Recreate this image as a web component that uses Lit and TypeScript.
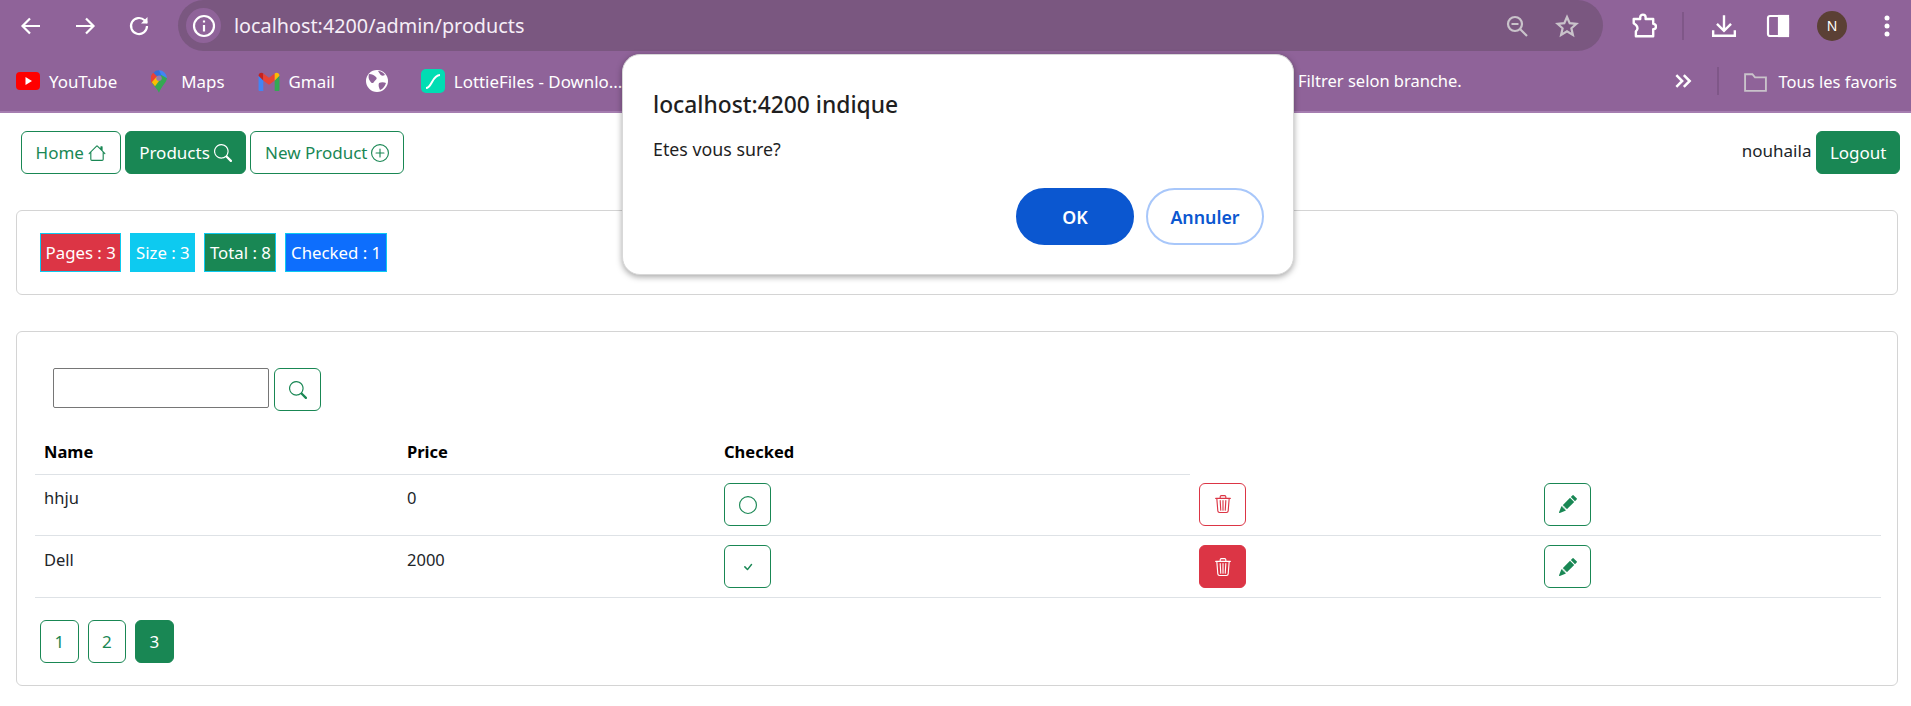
import { LitElement, html, css, svg } from 'lit';
import { customElement } from 'lit/decorators.js';

const bi = (d: string, size = 18) => html`<svg width=${size} height=${size} viewBox="0 0 16 16" fill="currentColor"><path d=${d}></path></svg>`;

const HOUSE = 'M8.707 1.5a1 1 0 0 0-1.414 0L.646 8.146a.5.5 0 0 0 .708.708L2 8.207V13.5A1.5 1.5 0 0 0 3.5 15h9a1.5 1.5 0 0 0 1.5-1.5V8.207l.646.647a.5.5 0 0 0 .708-.708L13 5.793V2.5a.5.5 0 0 0-.5-.5h-1a.5.5 0 0 0-.5.5v1.293L8.707 1.5ZM13 7.207V13.5a.5.5 0 0 1-.5.5h-9a.5.5 0 0 1-.5-.5V7.207l5-5 5 5Z';
const SEARCH = 'M11.742 10.344a6.5 6.5 0 1 0-1.397 1.398h-.001c.03.04.062.078.098.115l3.85 3.85a1 1 0 0 0 1.415-1.414l-3.85-3.85a1.007 1.007 0 0 0-.115-.1zM12 6.5a5.5 5.5 0 1 1-11 0 5.5 5.5 0 0 1 11 0z';
const PLUS = 'M8 15A7 7 0 1 1 8 1a7 7 0 0 1 0 14zm0 1A8 8 0 1 0 8 0a8 8 0 0 0 0 16zM8 4a.5.5 0 0 1 .5.5v3h3a.5.5 0 0 1 0 1h-3v3a.5.5 0 0 1-1 0v-3h-3a.5.5 0 0 1 0-1h3v-3A.5.5 0 0 1 8 4z';
const CIRCLE = 'M8 15A7 7 0 1 1 8 1a7 7 0 0 1 0 14zm0 1A8 8 0 1 0 8 0a8 8 0 0 0 0 16z';
const CHECK = 'M10.97 4.97a.75.75 0 0 1 1.07 1.05l-3.99 4.99a.75.75 0 0 1-1.08.02L4.324 8.384a.75.75 0 1 1 1.06-1.06l2.094 2.093 3.473-4.425a.267.267 0 0 1 .02-.022z';
const TRASH = 'M6.5 1h3a.5.5 0 0 1 .5.5v1H6v-1a.5.5 0 0 1 .5-.5ZM11 2.5v-1A1.5 1.5 0 0 0 9.5 0h-3A1.5 1.5 0 0 0 5 1.5v1H2.506a.58.58 0 0 0-.01 0H1.5a.5.5 0 0 0 0 1h.538l.853 10.66A2 2 0 0 0 4.885 16h6.23a2 2 0 0 0 1.994-1.84l.853-10.66h.538a.5.5 0 0 0 0-1h-.995a.59.59 0 0 0-.01 0H11Zm1.958 1-.846 10.58a1 1 0 0 1-.997.92h-6.23a1 1 0 0 1-.997-.92L3.042 3.5h9.916Zm-7.487 1a.5.5 0 0 1 .528.47l.5 8.5a.5.5 0 0 1-.998.06L5 5.03a.5.5 0 0 1 .47-.53Zm5.058 0a.5.5 0 0 1 .47.53l-.5 8.5a.5.5 0 1 1-.998-.06l.5-8.5a.5.5 0 0 1 .528-.47ZM8 4.5a.5.5 0 0 1 .5.5v8.5a.5.5 0 0 1-1 0V5a.5.5 0 0 1 .5-.5Z';
const PENCIL = 'M12.854.146a.5.5 0 0 0-.707 0L10.5 1.793 14.207 5.5l1.647-1.646a.5.5 0 0 0 0-.708l-3-3zm.646 6.061L9.793 2.5 3.293 9H3.5a.5.5 0 0 1 .5.5v.5h.5a.5.5 0 0 1 .5.5v.5h.5a.5.5 0 0 1 .5.5v.5h.5a.5.5 0 0 1 .5.5v.207l6.5-6.5zm-7.468 7.468A.5.5 0 0 1 6 13.5V13h-.5a.5.5 0 0 1-.5-.5V12h-.5a.5.5 0 0 1-.5-.5V11h-.5a.5.5 0 0 1-.5-.5V10h-.5a.499.499 0 0 1-.175-.032l-.179.178a.5.5 0 0 0-.11.168l-2 5a.5.5 0 0 0 .65.65l5-2a.5.5 0 0 0 .168-.11l.178-.178z';

// browser chrome glyphs, 24 unit box, stroked in white
const chrome = (body: unknown, size = 24) => html`<svg width=${size} height=${size} viewBox="0 0 24 24" fill="none" stroke="currentColor" stroke-width="2.2">${body}</svg>`;

const ytIcon = html`<svg width="24" height="18" viewBox="0 0 24 18"><rect width="24" height="18" rx="4" fill="#f00"></rect><path d="M9.5 5l6.500 4-6.500 4z" fill="#fff"></path></svg>`;
const mapsIcon = html`<svg width="16" height="23" viewBox="0 0 20 28"><path d="M10 0a10 10 0 0 1 10 10L10 12z" fill="#4285f4"></path><path d="M3 3a10 10 0 0 1 7-3l3 6-7 6z" fill="#1a73e8" opacity=".8"></path><path d="M3 3l5 5-7 8a10 10 0 0 1 2-13z" fill="#ea4335"></path><path d="M1 15l12-9 7 4c-1 6-7 10-10 18C8 23 3 20 1 15z" fill="#34a853"></path><path d="M1 15l6-7 5 3-7 9z" fill="#fbbc04"></path><circle cx="10" cy="10" r="3.4" fill="#9a7aa8"></circle></svg>`;
const gmailIcon = html`<svg width="22" height="19" viewBox="0 0 22 20"><path d="M0 4v15a1 1 0 0 0 1 1h4V9z" fill="#4285f4"></path><path d="M22 4v15a1 1 0 0 1-1 1h-4V9z" fill="#34a853"></path><path d="M0 4c0-3 3-4 5-2.500V9z" fill="#c5221f"></path><path d="M5 1.500L11 6l6-4.500V9l-6 4.500L5 9z" fill="#ea4335"></path><path d="M17 1.500C19 0 22 1 22 4l-5 5z" fill="#fbbc04"></path></svg>`;
const globeIcon = html`<svg width="22" height="22" viewBox="0 0 22 22"><circle cx="11" cy="11" r="11" fill="#fff"></circle><path d="M3 4c3 0 5 1 7 3s-1 3-2 5-3 1-4-1-2-3-1-7zM13 13c2-1 5-1 7 0-1 3-3 6-6 7-1-2-2-5-1-7zM12 1c3 0 6 2 7 4-2 1-4 1-5-1z" fill="#8f6399"></path></svg>`;
const lottieIcon = html`<svg width="24" height="24" viewBox="0 0 24 24"><rect width="24" height="24" rx="5" fill="#00ddb3"></rect><path d="M5 19c6 0 6-13 14-13" fill="none" stroke="#fff" stroke-width="2"></path></svg>`;

@customElement('app-root')
export class AppRoot extends LitElement {
  static styles = css`
    :host {
      display: block;
      position: relative;
      height: 706px;
      overflow: hidden;
      background: #fff;
      color: #212529;
      font-family: 'Noto Sans', 'Open Sans', sans-serif;
      font-size: 17px;
    }
    svg {
      display: block;
      flex: none;
    }

    .toolbar {
      height: 51px;
      background: #8f6399;
      display: flex;
      align-items: center;
      color: #fff;
      padding-left: 19px;
    }
    .nav-icon {
      width: 24px;
      margin-right: 30px;
    }
    .nav-icon.last {
      margin-right: 27px;
    }
    .address {
      width: 1425px;
      height: 51px;
      background: #7a5780;
      border-radius: 26px;
      display: flex;
      align-items: center;
      padding: 0 8px;
      box-sizing: border-box;
    }
    .info {
      width: 35px;
      height: 35px;
      border-radius: 50%;
      background: #8f6399;
      display: flex;
      align-items: center;
      justify-content: center;
      margin-right: 13px;
    }
    .url {
      font-size: 19.8px;
      flex: 1;
      color: #f6eef7;
    }
    .addr-icons {
      display: flex;
      gap: 26px;
      padding-right: 16px;
      color: #c9c3ca;
    }
    .tools {
      display: flex;
      align-items: center;
      margin-left: 28px;
    }
    .tool-sep {
      width: 2px;
      height: 28px;
      background: #7f5788;
      margin: 0 27px 0 25px;
    }
    .tool-gap {
      width: 29px;
    }
    .avatar {
      width: 30px;
      height: 30px;
      border-radius: 50%;
      background: #5b4035;
      color: #fff;
      font-size: 14px;
      display: flex;
      align-items: center;
      justify-content: center;
      margin: 0 37px 0 27px;
    }

    .bookmarks {
      height: 60px;
      background: #8f6399;
      border-bottom: 2px solid #a57db0;
      display: flex;
      align-items: center;
      color: #fff;
      font-size: 16.5px;
      padding-left: 16px;
    }
    .bm {
      display: flex;
      align-items: center;
      gap: 9px;
      margin-right: 33px;
      white-space: nowrap;
      font-size: 16.9px;
    }
    .bm.maps {
      gap: 14px;
      margin-left: 1px;
    }
    .bm.gmail {
      margin-right: 31px;
    }
    .bm-right {
      margin-left: auto;
      display: flex;
      align-items: center;
      padding-right: 14px;
    }
    .filter {
      position: absolute;
      left: 1298px;
      top: 69px;
      white-space: nowrap;
      line-height: 24px;
    }
    .bm-sep {
      width: 2px;
      height: 28px;
      background: #7f5788;
      margin: 0 24px;
    }
    .folder {
      color: #c9c3ca;
      margin-right: 11px;
    }

    .nav {
      display: flex;
      align-items: center;
      padding: 18px 11px 0 21px;
      gap: 4px;
    }
    .btn {
      box-sizing: border-box;
      height: 43px;
      display: inline-flex;
      align-items: center;
      justify-content: center;
      border: 1px solid #198754;
      border-radius: 6px;
      background: #fff;
      color: #198754;
      font: inherit;
      padding: 0 13.6px;
      gap: 4px;
      white-space: nowrap;
    }
    .btn.solid {
      background: #198754;
      color: #fff;
    }
    .btn.danger {
      border-color: #dc3545;
      color: #dc3545;
    }
    .btn.danger.solid {
      background: #dc3545;
      color: #fff;
    }
    .icon-btn {
      width: 47px;
      padding: 0;
    }
    .spacer {
      flex: 1;
    }
    .user {
      margin-right: 1px;
      padding-bottom: 4px;
    }
    .logout {
      padding: 0 12.500px;
    }

    .card {
      box-sizing: border-box;
      margin: 0 13px 0 16px;
      border: 1px solid #d4d4d4;
      border-radius: 6px;
    }
    .stats {
      margin-top: 36px;
      height: 85px;
      padding: 22px 23px;
      display: flex;
      gap: 9px;
      align-items: flex-start;
      font-size: 16.8px;
    }
    .badge {
      box-sizing: border-box;
      height: 39px;
      display: flex;
      align-items: center;
      padding: 0 4.6px;
      border: 1px solid #0dcaf0;
      color: #fff;
      white-space: nowrap;
    }
    .products {
      margin-top: 36px;
      height: 355px;
      padding: 36px 18px 0;
    }
    .search {
      display: flex;
      gap: 5px;
      padding-left: 18px;
      align-items: flex-start;
    }
    input {
      box-sizing: border-box;
      width: 216px;
      height: 40px;
      border: 1px solid #767676;
      border-radius: 2px;
      padding: 0;
      background: #fff;
    }
    table {
      width: 1846px;
      table-layout: fixed;
      border-collapse: collapse;
      margin-top: 16px;
    }
    th {
      text-align: left;
      font-weight: 700;
      font-size: 16.5px;
      color: #000;
      height: 45px;
      padding: 2px 9px 0;
      border-bottom: 1px solid #dee2e6;
    }
    th.empty {
      border-bottom: 0;
    }
    td {
      height: 61px;
      box-sizing: border-box;
      padding: 8px 9px;
      vertical-align: top;
      border-bottom: 1px solid #dee2e6;
      color: #212529;
      font-size: 16.5px;
      line-height: 30px;
    }
    tr.tall td {
      height: 62px;
      padding-top: 9px;
    }
    td .btn {
      display: flex;
    }
    .pages {
      display: flex;
      gap: 9px;
      margin: 22px 0 0 5px;
    }
    .pages .btn {
      width: 38.500px;
      padding: 0;
    }

    .dialog {
      position: absolute;
      left: 622px;
      top: 54px;
      width: 672px;
      height: 221px;
      box-sizing: border-box;
      background: #fff;
      border-radius: 18px;
      border: 1px solid #d8d8d8;
      box-shadow: 0 2px 6px rgba(0, 0, 0, 0.35);
      padding: 34px 30px 0 30px;
      color: #1f1f1f;
    }
    .dialog h1 {
      margin: 0;
      font-size: 22.8px;
      font-weight: 500;
      line-height: 32px;
    }
    .dialog p {
      margin: 16px 0 0;
      font-size: 17.8px;
      line-height: 24px;
    }
    .actions {
      display: flex;
      justify-content: flex-end;
      gap: 12px;
      margin: 27px -1px 0 0;
    }
    .pill {
      box-sizing: border-box;
      width: 118px;
      height: 57px;
      border-radius: 29px;
      border: 2px solid #a8c7fa;
      background: #fff;
      color: #0b57d0;
      font: inherit;
      font-size: 17.8px;
      font-weight: 600;
    }
    .pill.primary {
      background: #0b57d0;
      border-color: #0b57d0;
      color: #fff;
    }
  `;

  private products = [
    { name: 'hhju', price: 0, checked: false },
    { name: 'Dell', price: 2000, checked: true },
  ];

  private renderToolbar() {
    return html`
      <div class="toolbar">
        <div class="nav-icon">${chrome(svg`<path d="M21 12H4M11 4.500L3.500 12l7.500 7.500"></path>`)}</div>
        <div class="nav-icon">${chrome(svg`<path d="M3 12h17M13 4.500l7.500 7.500-7.500 7.500"></path>`)}</div>
        <div class="nav-icon last">${chrome(svg`<path d="M20 12a8 8 0 1 1-2.400-5.700L20 8.700"></path><path d="M20.500 3v6.500H14" fill="#fff" stroke="none"></path>`)}</div>
        <div class="address">
          <div class="info">${chrome(svg`<circle cx="12" cy="12" r="10"></circle><path d="M12 11v6.500M12 6.500v2"></path>`)}</div>
          <div class="url">localhost:4200/admin/products</div>
          <div class="addr-icons">
            ${chrome(svg`<circle cx="10" cy="10" r="7"></circle><path d="M15 15l7 7M6.500 10h7"></path>`)}
            ${chrome(svg`<path d="M12 3l2.700 6.200 6.700.6-5 4.500 1.500 6.600L12 17.400 6.100 20.900l1.500-6.600-5-4.500 6.700-.6z"></path>`)}
          </div>
        </div>
        <div class="tools">
          ${chrome(svg`<path d="M2.500 5.500H8.500V4a2.500 2.500 0 0 1 5 0v1.500H20.500V10a2.500 2.500 0 0 1 0 5V21.500H4.500V17c2-2 2-4 0-6l-2-1.500z" stroke-linejoin="round"></path>`, 26)}
          <div class="tool-sep"></div>
          ${chrome(svg`<path d="M12 2v14M5.500 10l6.500 6.500 6.500-6.500M2 16v5h20v-5"></path>`, 26)}
          <div class="tool-gap"></div>
          ${chrome(svg`<rect x="2" y="2" width="20" height="20" rx="2"></rect><rect x="13" y="2" width="9" height="20" fill="currentColor"></rect>`, 24)}
          <div class="avatar">N</div>
          <svg width="6" height="24" viewBox="0 0 6 24" fill="#fff"><circle cx="3" cy="4" r="2.500"></circle><circle cx="3" cy="12" r="2.500"></circle><circle cx="3" cy="20" r="2.500"></circle></svg>
        </div>
      </div>
    `;
  }

  private renderBookmarks() {
    return html`
      <div class="bookmarks">
        <div class="bm">${ytIcon}YouTube</div>
        <div class="bm maps">${mapsIcon}Maps</div>
        <div class="bm gmail">${gmailIcon}Gmail</div>
        <div class="bm">${globeIcon}</div>
        <div class="bm">${lottieIcon}LottieFiles - Downlo...</div>
        <div class="filter">Filtrer selon branche.</div>
        <div class="bm-right">
          ${chrome(svg`<path d="M4 5l7 7-7 7M13 5l7 7-7 7" stroke-width="3"></path>`, 20)}
          <div class="bm-sep"></div>
          <div class="folder">${chrome(svg`<path d="M2 5h7l2.500 3H22v13H2z" stroke-width="1.800"></path>`, 25)}</div>
          Tous les favoris
        </div>
      </div>
    `;
  }

  private renderRow(p: { name: string; price: number; checked: boolean }, i: number) {
    return html`
      <tr class=${i === 1 ? 'tall' : ''}>
        <td>${p.name}</td>
        <td>${p.price}</td>
        <td><button class="btn icon-btn">${bi(p.checked ? CHECK : CIRCLE, p.checked ? 16 : 18)}</button></td>
        <td><button class="btn icon-btn danger ${p.checked ? 'solid' : ''}">${bi(TRASH)}</button></td>
        <td><button class="btn icon-btn">${bi(PENCIL)}</button></td>
      </tr>
    `;
  }

  render() {
    return html`
      ${this.renderToolbar()}
      ${this.renderBookmarks()}

      <div class="nav">
        <button class="btn">Home ${bi(HOUSE)}</button>
        <button class="btn solid">Products ${bi(SEARCH)}</button>
        <button class="btn">New Product ${bi(PLUS)}</button>
        <div class="spacer"></div>
        <span class="user">nouhaila</span>
        <button class="btn solid logout">Logout</button>
      </div>

      <div class="card stats">
        <div class="badge" style="background:#dc3545">Pages : 3</div>
        <div class="badge" style="background:#0dcaf0">Size : 3</div>
        <div class="badge" style="background:#198754">Total : 8</div>
        <div class="badge" style="background:#0d6efd">Checked : 1</div>
      </div>

      <div class="card products">
        <div class="search">
          <input type="text" />
          <button class="btn icon-btn">${bi(SEARCH)}</button>
        </div>
        <table>
          <colgroup>
            <col style="width:363px" /><col style="width:317px" /><col style="width:475px" /><col style="width:345px" /><col style="width:346px" />
          </colgroup>
          <thead>
            <tr><th>Name</th><th>Price</th><th>Checked</th><th class="empty"></th><th class="empty"></th></tr>
          </thead>
          <tbody>${this.products.map((p, i) => this.renderRow(p, i))}</tbody>
        </table>
        <div class="pages">
          <button class="btn">1</button>
          <button class="btn">2</button>
          <button class="btn solid">3</button>
        </div>
      </div>

      <div class="dialog">
        <h1>localhost:4200 indique</h1>
        <p>Etes vous sure?</p>
        <div class="actions">
          <button class="pill primary">OK</button>
          <button class="pill">Annuler</button>
        </div>
      </div>
    `;
  }
}
